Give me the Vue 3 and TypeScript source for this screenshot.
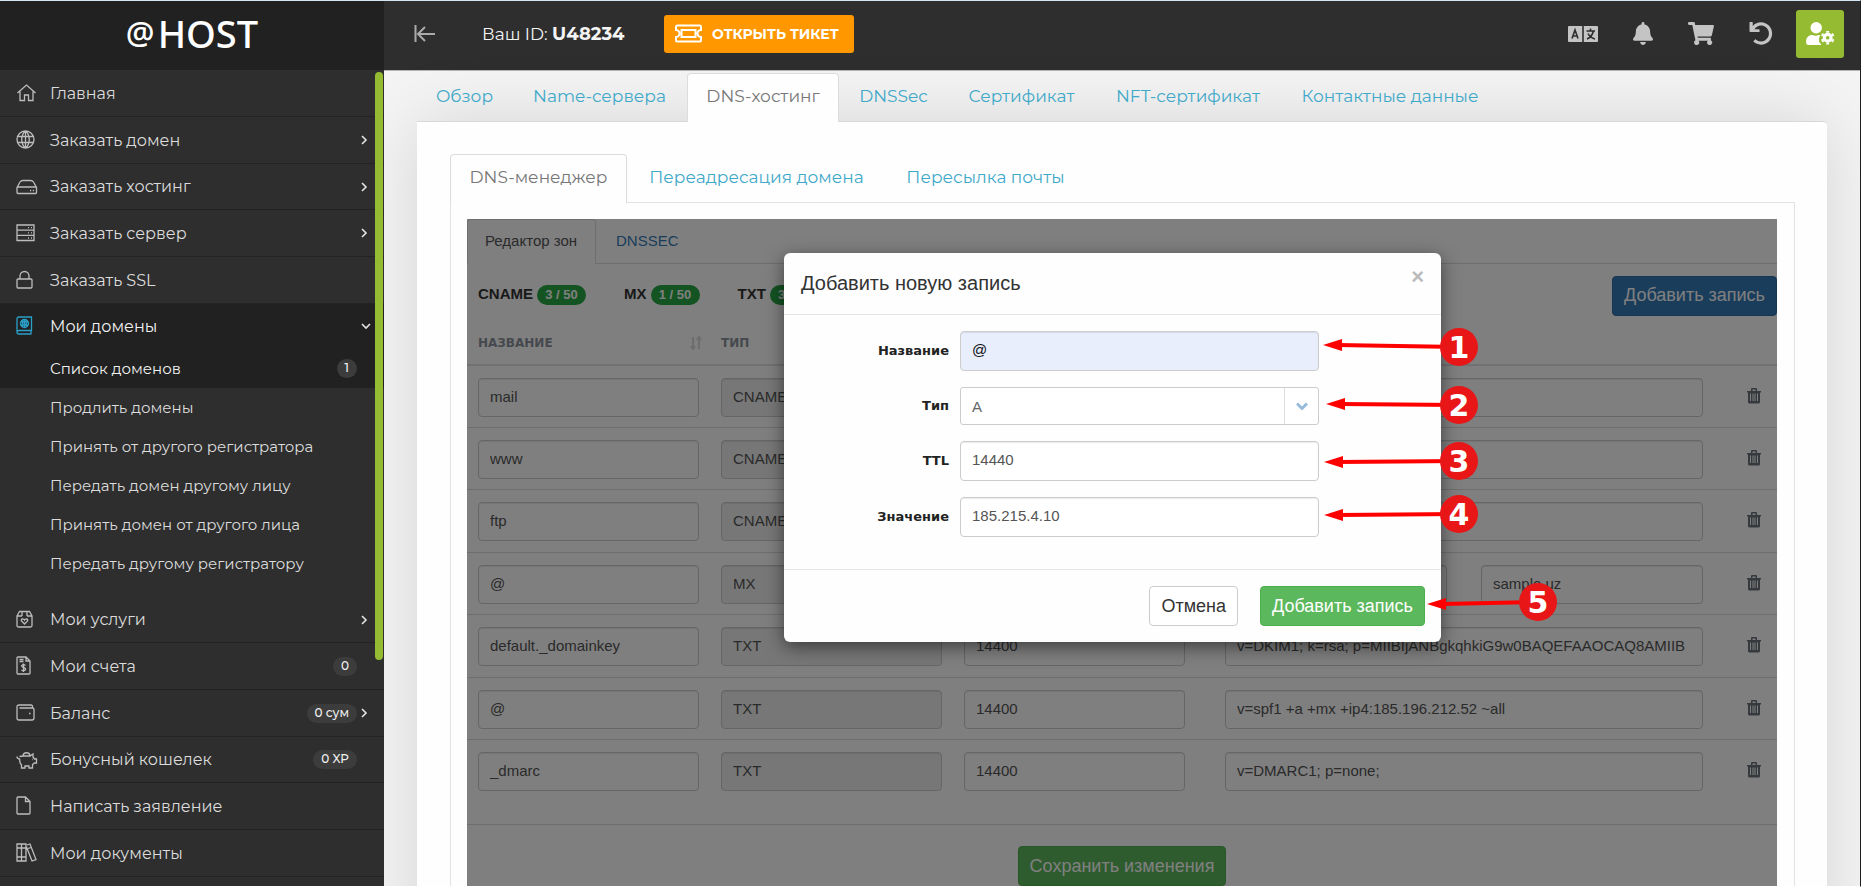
<script setup lang="ts">
import { ref } from 'vue'

interface MenuItem {
  label: string
  icon: string
  badge?: string
  arrow?: boolean
}

interface DnsRecord {
  name: string
  type: string
  ttl: string
  values: string[]
}

const icons: Record<string, string> = {
  home: 'M1.5 10L10.5 2L19.5 10M4 8.5V17.5H8.5V12H12.5V17.5H17V8.5',
  globe:
    'M1 9.5a8.5 8.5 0 1 0 17 0a8.5 8.5 0 1 0-17 0M2 6.5H17M2 12.5H17M9.5 1v17M9.5 1c-5 4-5 13 0 17M9.5 1c5 4 5 13 0 17',
  drive:
    'M1 10.5L4 5Q5 3.5 7 3.5H14.500Q16.500 3.500 17.500 5L20.500 10.500V15.500Q20.500 16.500 19.500 16.500H2Q1 16.500 1 15.500ZM1.500 10H20M14 13.500h1.200M16.800 13.500h1.200',
  server: 'M1 2H18V17.500H1ZM1 7.200H18M1 12.400H18M12 4.600h1M15 4.600h1M12 9.800h1M15 9.800h1M12 15h1M15 15h1',
  lock: 'M2 9H15Q16 9 16 10V17Q16 18 15 18H2Q1 18 1 17V10Q1 9 2 9ZM4 9V6a4.500 4.500 0 0 1 9 0V9',
  book: 'M3 1H15.500V14.500H3Q1 14.500 1 16.200Q1 18 3 18H15.500M1 16V3Q1 1 3 1M15 14.500V18M4.500 7.500a4 4 0 1 0 8 0a4 4 0 1 0-8 0M4.500 6H12.500M4.500 9H12.500M8.500 3.500V11.500M6.700 4.500V10.500M10.300 4.500V10.500',
  box: 'M1 6L3.500 1.500H13.500L16 6V15.500Q16 17 14.500 17H2.500Q1 17 1 15.500ZM1 6H6M11 6H16M6 1.500V6M11 1.500V6M8.500 14L5.500 11Q4.800 9 6.500 8.800Q8 9 8.500 10Q9 9 10.500 8.800Q12.200 9 11.500 11Z',
  invoice: 'M2 1H10L14 5V17.500Q14 18 13 18H2Q1 18 1 17V2Q1 1 2 1ZM10 1V5H14M3.500 3.500H7.500M3.500 5.500H7.500M9.500 9.500Q7.500 7.800 5.800 9.500Q5.500 11 7.500 11.500Q10 12 9.500 13.800Q7.500 15.500 5.500 14M7.500 7.500V16',
  wallet: 'M16.500 4.500V3.500Q16.500 2 15 2H3Q1 2 1 4V15Q1 17 3 17H16Q18 17 18 15V6.500Q18 5 16.500 5H3.500M13 10.500h1.500',
  piggy: 'M1 6.500Q1 9 4 9M3.500 6.500L7.500 6H14L17 4V7L18.500 9H20.500V13H18.500L16.500 14.500V18H13V16H9V18H5.500V15Q3 12 4 9M7 5.500A3.600 3.600 0 0 1 14 5.500M16 9.500h.5',
  file: 'M2 1H9.500L14 5.500V17Q14 18 13 18H2Q1 18 1 17V2Q1 1 2 1ZM9.500 1V5.500H14',
  books: 'M1 1H10V18H1ZM5.500 1V18M1 5H10M1 14H10M11 2L14 1L20 16.500L16 18L10.500 4M12 5.500L15 4.500',
}

const topMenu: MenuItem[] = [
  { label: 'Главная', icon: 'home' },
  { label: 'Заказать домен', icon: 'globe', arrow: true },
  { label: 'Заказать хостинг', icon: 'drive', arrow: true },
  { label: 'Заказать сервер', icon: 'server', arrow: true },
  { label: 'Заказать SSL', icon: 'lock' },
]

const domainMenu = [
  'Продлить домены',
  'Принять от другого регистратора',
  'Передать домен другому лицу',
  'Принять домен от другого лица',
  'Передать другому регистратору',
]

const bottomMenu: MenuItem[] = [
  { label: 'Мои услуги', icon: 'box', arrow: true },
  { label: 'Мои счета', icon: 'invoice', badge: '0' },
  { label: 'Баланс', icon: 'wallet', badge: '0 сум', arrow: true },
  { label: 'Бонусный кошелек', icon: 'piggy', badge: '0 XP' },
  { label: 'Написать заявление', icon: 'file' },
  { label: 'Мои документы', icon: 'books' },
]

const tabs = ['Обзор', 'Name-сервера', 'DNS-хостинг', 'DNSSec', 'Сертификат', 'NFT-сертификат', 'Контактные данные']
const subTabs = ['DNS-менеджер', 'Переадресация домена', 'Пересылка почты']

const quotas = [
  { type: 'CNAME', used: '3 / 50' },
  { type: 'MX', used: '1 / 50' },
  { type: 'TXT', used: '3 / 50' },
]

const records = ref<DnsRecord[]>([
  { name: 'mail', type: 'CNAME', ttl: '14400', values: [''] },
  { name: 'www', type: 'CNAME', ttl: '14400', values: [''] },
  { name: 'ftp', type: 'CNAME', ttl: '14400', values: [''] },
  { name: '@', type: 'MX', ttl: '14400', values: ['', 'sample.uz'] },
  {
    name: 'default._domainkey',
    type: 'TXT',
    ttl: '14400',
    values: ['v=DKIM1; k=rsa; p=MIIBIjANBgkqhkiG9w0BAQEFAAOCAQ8AMIIB'],
  },
  { name: '@', type: 'TXT', ttl: '14400', values: ['v=spf1 +a +mx +ip4:185.196.212.52 ~all'] },
  { name: '_dmarc', type: 'TXT', ttl: '14400', values: ['v=DMARC1; p=none;'] },
])

const form = ref({ name: '@', type: 'A', ttl: '14440', value: '185.215.4.10' })

const markers = [
  { n: 1, x: 675, y: 94, tipX: 539, tipY: 92 },
  { n: 2, x: 675, y: 152, tipX: 542, tipY: 151 },
  { n: 3, x: 675, y: 208, tipX: 540, tipY: 209 },
  { n: 4, x: 675, y: 261, tipX: 540, tipY: 262 },
  { n: 5, x: 754, y: 349, tipX: 643, tipY: 351 },
]
</script>

<template>
  <div class="app">
    <aside class="sidebar">
      <a class="logo" href="#"><span class="logo-at">@</span>HOST</a>
      <nav class="menu">
        <a v-for="item in topMenu" :key="item.label" class="menu-row" href="#">
          <svg class="menu-icon" viewBox="0 0 22 20"><path :d="icons[item.icon]" /></svg>
          <span class="menu-label">{{ item.label }}</span>
          <svg v-if="item.arrow" class="arrow" viewBox="0 0 10 10"><path d="M3 1l4 4-4 4" /></svg>
        </a>
        <a class="menu-row open" href="#">
          <svg class="menu-icon" viewBox="0 0 22 20"><path :d="icons.book" /></svg>
          <span class="menu-label">Мои домены</span>
          <svg class="arrow" viewBox="0 0 10 10"><path d="M1 3l4 4 4-4" /></svg>
        </a>
        <a class="sub-row current" href="#">
          <span class="menu-label">Список доменов</span>
          <span class="count">1</span>
        </a>
        <div class="sub-menu">
          <a v-for="label in domainMenu" :key="label" class="sub-row" href="#">{{ label }}</a>
        </div>
        <a v-for="item in bottomMenu" :key="item.label" class="menu-row" href="#">
          <svg class="menu-icon" viewBox="0 0 22 20"><path :d="icons[item.icon]" /></svg>
          <span class="menu-label">{{ item.label }}</span>
          <span v-if="item.badge" class="count">{{ item.badge }}</span>
          <svg v-if="item.arrow" class="arrow" viewBox="0 0 10 10"><path d="M3 1l4 4-4 4" /></svg>
        </a>
      </nav>
      <div class="scroll-thumb"></div>
    </aside>

    <div class="content">
      <header class="topbar">
        <button class="icon-btn collapse" type="button" aria-label="Свернуть меню">
          <svg width="22" height="20" viewBox="0 0 22 20"><path d="M1.500 1V18M4 10H21M11 3L4 10L11 17" /></svg>
        </button>
        <span class="user-id">Ваш ID: <b>U48234</b></span>
        <button class="ticket-btn" type="button">
          <svg width="27" height="19" viewBox="0 0 27 19">
            <path d="M2 1.500H25Q26 1.500 26 3V6A3.500 3.500 0 0 0 26 13V16Q26 17.500 25 17.500H2Q1 17.500 1 16V13A3.500 3.500 0 0 0 1 6V3Q1 1.500 2 1.500ZM6.500 6H20.500V13H6.500Z" />
          </svg>
          ОТКРЫТЬ ТИКЕТ
        </button>
        <div class="tools">
          <button class="icon-btn" type="button" aria-label="Язык">
            <svg width="30" height="16" viewBox="0 0 30 16">
              <path class="solid" d="M1 0H29Q30 0 30 1V15Q30 16 29 16H1Q0 16 0 15V1Q0 0 1 0Z" />
              <path class="cut" d="M15 0V16M4 12.500L7 4L10 12.500M5 10H9M18.500 5H27M22.500 2.500V5M25.500 5Q24 11 19 13M20 7.500Q22 11.500 27 13" />
            </svg>
          </button>
          <button class="icon-btn" type="button" aria-label="Уведомления">
            <svg width="20" height="23" viewBox="0 0 448 512">
              <path class="solid" d="M224 512c35 0 64-29 64-64H160c0 35 29 64 64 64zm215-150c-19-21-55-52-55-154 0-78-54-140-128-155V32a32 32 0 1 0-64 0v21C118 68 64 130 64 208c0 102-36 133-55 154-6 6-9 14-9 22 0 16 13 32 32 32h384c19 0 32-16 32-32 0-8-3-16-9-22z" />
            </svg>
          </button>
          <button class="icon-btn" type="button" aria-label="Корзина">
            <svg width="26" height="23" viewBox="0 0 576 512">
              <path class="solid" d="M528 301l47-208c4-15-8-29-23-29H159l-9-45C148 8 138 0 126 0H24C11 0 0 11 0 24v16c0 13 11 24 24 24h70l70 343a56 56 0 1 0 67 9h210a56 56 0 1 0 64-10l5-25c4-15-8-29-23-29H218l-7-32h294c11 0 21-8 23-19z" />
            </svg>
          </button>
          <button class="icon-btn" type="button" aria-label="Обновить">
            <svg width="24" height="23" viewBox="0 0 512 512">
              <path class="solid" d="M212 224H24c-13 0-24-11-24-24V12C0 5 5 0 12 0h48c7 0 12 5 12 12v78A247 247 0 0 1 256 8c137 0 248 111 248 248S393 504 256 504c-63 0-121-24-165-62-5-5-5-13 0-18l34-34c4-4 12-5 17-1 30 27 70 43 114 43a176 176 0 1 0-147-272h103c7 0 12 5 12 12v40c0 7-5 12-12 12z" />
            </svg>
          </button>
          <button class="account" type="button" aria-label="Аккаунт">
            <svg width="29" height="23" viewBox="0 0 640 512">
              <path class="solid" d="M224 256a128 128 0 1 0 0-256a128 128 0 1 0 0 256zM320 480c-50-45-40-130-2-186l-20-6h-17a174 174 0 0 1-146 0h-1C60 288 0 348 0 422v42c0 26 22 48 48 48h290z" />
              <path class="gear" d="M480 198v44M480 458v44M348 274l38 22M574 404l38 22M348 426l38-22M574 296l38-22" />
              <circle class="gear-ring" cx="480" cy="350" r="76" />
            </svg>
          </button>
        </div>
      </header>

      <main class="main">
        <nav class="tabs">
          <a v-for="tab in tabs" :key="tab" class="tab" :class="{ active: tab === 'DNS-хостинг' }" href="#">{{ tab }}</a>
        </nav>
        <section class="card">
          <nav class="tabs sub-tabs">
            <a v-for="tab in subTabs" :key="tab" class="tab" :class="{ active: tab === 'DNS-менеджер' }" href="#">{{ tab }}</a>
          </nav>
          <div class="sub-card">
            <div class="panel">
              <nav class="zone-tabs">
                <a class="zone-tab active" href="#">Редактор зон</a>
                <a class="zone-tab" href="#">DNSSEC</a>
              </nav>
              <div class="zone-bar">
                <span v-for="quota in quotas" :key="quota.type" class="quota">
                  {{ quota.type }} <span class="quota-badge">{{ quota.used }}</span>
                </span>
                <button class="btn primary" type="button">Добавить запись</button>
              </div>
              <table class="records">
                <colgroup>
                  <col class="col-field" />
                  <col class="col-field" />
                  <col class="col-field" />
                  <col />
                  <col class="col-action" />
                </colgroup>
                <thead>
                  <tr>
                    <th>
                      <span class="th-in">
                        НАЗВАНИЕ
                        <svg width="12" height="14" viewBox="0 0 12 14"><path d="M3 1V12M1 10L3 13L5 10M9 13V2M7 4L9 1L11 4" /></svg>
                      </span>
                    </th>
                    <th>ТИП</th>
                    <th></th>
                    <th></th>
                    <th></th>
                  </tr>
                </thead>
                <tbody>
                  <tr v-for="(record, i) in records" :key="i">
                    <td><input v-model="record.name" class="field" aria-label="Название" /></td>
                    <td><input :value="record.type" class="field" aria-label="Тип" disabled /></td>
                    <td><input v-model="record.ttl" class="field" aria-label="TTL" /></td>
                    <td class="value-cell">
                      <div class="values">
                        <input v-for="(_, j) in record.values" :key="j" v-model="record.values[j]" class="field" aria-label="Значение" />
                      </div>
                    </td>
                    <td class="action">
                      <button class="trash" type="button" aria-label="Удалить">
                        <svg width="14" height="16" viewBox="0 0 14 16">
                          <path d="M4 3V1Q4 0 5 0H9Q10 0 10 1V3H14V4.500H13V14Q13 15.500 11.500 15.500H2.500Q1 15.500 1 14V4.500H0V3ZM5.500 1.500V3H8.500V1.500ZM3 5.500V13H4V5.500ZM5.500 5.500V13H6.500V5.500ZM7.500 5.500V13H8.500V5.500ZM10 5.500V13H11V5.500Z" />
                        </svg>
                      </button>
                    </td>
                  </tr>
                </tbody>
              </table>
              <div class="save-bar">
                <button class="btn success" type="button">Сохранить изменения</button>
              </div>

              <div class="backdrop">
                <form class="modal" role="dialog" aria-labelledby="dialog-title" @submit.prevent>
                  <header class="modal-head">
                    <h2 id="dialog-title">Добавить новую запись</h2>
                    <button class="close" type="button" aria-label="Закрыть">×</button>
                  </header>
                  <div class="modal-body">
                    <label for="rec-name">Название</label>
                    <input id="rec-name" v-model="form.name" class="field filled" />
                    <label for="rec-type">Тип</label>
                    <div class="select">
                      <select id="rec-type" v-model="form.type">
                        <option>A</option>
                        <option>CNAME</option>
                        <option>MX</option>
                        <option>TXT</option>
                      </select>
                      <span class="caret">
                        <svg width="12" height="8" viewBox="0 0 12 8"><path d="M1 1.500L6 6.500L11 1.500" /></svg>
                      </span>
                    </div>
                    <label for="rec-ttl">TTL</label>
                    <input id="rec-ttl" v-model="form.ttl" class="field" />
                    <label for="rec-value">Значение</label>
                    <input id="rec-value" v-model="form.value" class="field" />
                  </div>
                  <footer class="modal-foot">
                    <button class="btn plain" type="button">Отмена</button>
                    <button class="btn success" type="submit">Добавить запись</button>
                  </footer>
                  <svg class="markers" width="657" height="390" viewBox="0 0 657 390">
                    <g v-for="m in markers" :key="m.n">
                      <line :x1="m.tipX + 14" :y1="m.tipY" :x2="m.x" :y2="m.y" />
                      <path :d="`M${m.tipX} ${m.tipY}l19-6v12z`" />
                      <circle :cx="m.x" :cy="m.y" r="19" />
                      <text :x="m.x" :y="m.y + 11">{{ m.n }}</text>
                    </g>
                  </svg>
                </form>
              </div>
            </div>
          </div>
        </section>
      </main>
    </div>
  </div>
</template>

<style>
body {
  margin: 0;
  overflow: hidden;
}
</style>

<style scoped>
* {
  box-sizing: border-box;
}
a {
  color: inherit;
  text-decoration: none;
}
button {
  font: inherit;
  cursor: pointer;
}
svg {
  display: block;
  flex: none;
}
.app {
  display: flex;
  height: 100vh;
  overflow: hidden;
  border-top: 1px solid #d3e6f2;
  border-right: 1px solid #1d1f22;
  border-bottom: 1px solid #fff;
  font-family: Montserrat, Inter, 'Noto Sans', sans-serif;
  font-size: 16px;
  background: #f4f4f4;
}

/* Sidebar */
.sidebar {
  position: relative;
  flex: none;
  width: 384px;
  background: #2e2e2e;
  color: #dcdcdc;
}
.logo {
  display: flex;
  align-items: center;
  justify-content: center;
  gap: 3px;
  height: 69px;
  padding-bottom: 5px;
  background: #212121;
  color: #fff;
  font-family: 'Noto Sans', 'Open Sans', sans-serif;
  font-size: 38px;
  font-weight: 500;
  line-height: 1;
}
.logo-at {
  font-size: 32px;
}
.menu {
  display: flex;
  flex-direction: column;
}
.menu-row {
  display: flex;
  align-items: center;
  height: 47px;
  padding: 0 15px 0 16px;
  border-bottom: 1px solid #232323;
}
.menu-row:nth-child(3n) {
  height: 46px;
}
.menu-icon {
  width: 22px;
  height: 20px;
  margin-right: 12px;
  fill: none;
  stroke: #bdbdbd;
  stroke-width: 1.3;
}
.menu-label {
  flex: 1;
}
.arrow {
  width: 10px;
  height: 10px;
  fill: none;
  stroke: #e4e4e4;
  stroke-width: 1.6;
}
.menu-row .count {
  margin-right: 12px;
}
.menu-row .count + .arrow {
  margin-left: -10px;
}
.menu-row.open {
  height: 44px;
  padding-right: 13px;
  border: 0;
  background: #212121;
  color: #f2f2f2;
}
.open .menu-icon {
  stroke: #2a9fc9;
}
.sub-row {
  display: flex;
  align-items: center;
  height: 39px;
  padding: 0 27px 0 50px;
  font-size: 15px;
}
.current {
  height: 40px;
  background: #212121;
  color: #f2f2f2;
}
.sub-menu {
  padding-bottom: 14px;
}
.count {
  height: 19px;
  padding: 0 8px;
  border-radius: 10px;
  background: #3c3c3c;
  color: #f0f0f0;
  font-size: 12px;
  font-weight: 500;
  line-height: 18px;
}
.scroll-thumb {
  position: absolute;
  top: 71px;
  right: 1px;
  width: 8px;
  height: 588px;
  border-radius: 4px;
  background: #94bb31;
}

/* Top bar */
.content {
  flex: 1;
  min-width: 0;
  overflow: hidden;
}
.topbar {
  display: flex;
  align-items: center;
  height: 70px;
  padding: 0 16px 4px 30px;
  border-bottom: 1px solid #b5b5b5;
  background: #2e2e2e;
  color: #f4f4f4;
}
.icon-btn {
  padding: 0;
  border: 0;
  background: none;
}
.collapse path {
  fill: none;
  stroke: #aaa;
  stroke-width: 2;
}
.user-id {
  width: 182px;
  margin-left: 46px;
  font-size: 17px;
  white-space: nowrap;
}
.user-id b {
  font-size: 18px;
}
.ticket-btn {
  display: flex;
  align-items: center;
  gap: 10px;
  width: 190px;
  height: 38px;
  padding: 0 11px;
  border: 0;
  border-radius: 3px;
  background: #ff9800;
  color: #fff;
  font-size: 14px;
  font-weight: 700;
  white-space: nowrap;
}
.ticket-btn path {
  fill: none;
  stroke: #fff;
  stroke-width: 2;
}
.tools {
  display: flex;
  align-items: center;
  gap: 35px;
  margin-left: auto;
}
.solid {
  fill: #c4c4c4;
}
.cut {
  fill: none;
  stroke: #2e2e2e;
  stroke-width: 1.6;
}
.account {
  display: flex;
  align-items: center;
  justify-content: center;
  width: 48px;
  height: 48px;
  margin-left: -12px;
  padding: 0;
  border: 0;
  border-radius: 3px;
  background: #94bb31;
}
.account .solid {
  fill: #fff;
}
.gear {
  stroke: #fff;
  stroke-width: 66;
}
.gear-ring {
  fill: none;
  stroke: #fff;
  stroke-width: 70;
}

/* Page */
.main {
  padding: 2px 33px 0;
}
.tabs {
  position: relative;
  display: grid;
  grid-template-columns: 95px 175px 152px 109px 147px 186px 218px;
  height: 49px;
  color: #3fa9c9;
  font-size: 17px;
  z-index: 1;
}
.tab {
  display: flex;
  align-items: center;
  justify-content: center;
  padding-bottom: 4px;
  white-space: nowrap;
}
.tab.active {
  border: 1px solid #dcdcdc;
  border-bottom: 0;
  border-radius: 4px 4px 0 0;
  background: #fefefe;
  color: #777;
}
.card {
  height: 900px;
  margin-top: -1px;
  padding: 32px 32px 0;
  border-top: 1px solid #d8d8d8;
  border-radius: 0 4px 0 0;
  background: #fefefe;
  box-shadow: 0 0 70px rgba(0, 0, 0, 0.13);
}
.sub-tabs {
  grid-template-columns: 177px 259px 199px;
  margin-left: 1px;
}
.sub-card {
  margin: -1px 0 0 1px;
  padding: 16px 17px 0 16px;
  border: 1px solid #e2e2e2;
}

/* Zone editor */
.panel {
  position: relative;
  height: 700px;
  background: #fff;
  color: #333;
  font-family: 'Liberation Sans', Arial, sans-serif;
  font-size: 15px;
}
.zone-tabs {
  display: flex;
  height: 45px;
  border-bottom: 1px solid #ddd;
}
.zone-tab {
  height: 45px;
  padding: 0 20px;
  color: #337ab7;
  line-height: 43px;
  white-space: nowrap;
}
.zone-tab.active {
  width: 129px;
  padding: 0 17px;
  border: 1px solid #ddd;
  border-bottom-color: #fff;
  border-radius: 4px 4px 0 0;
  color: #555;
  line-height: 41px;
}
.zone-bar {
  display: flex;
  align-items: center;
  gap: 38px;
  height: 63px;
  padding-left: 11px;
}
.quota {
  display: flex;
  align-items: center;
  gap: 4px;
  padding-bottom: 5px;
  color: #333;
  font-weight: 700;
}
.quota-badge {
  width: 49px;
  height: 20px;
  margin-top: 3px;
  border-radius: 10px;
  background: #28a745;
  color: #fff;
  font-size: 13px;
  line-height: 20px;
  text-align: center;
}
.btn {
  height: 40px;
  padding: 0 11px;
  border: 1px solid;
  border-radius: 4px;
  font-size: 18px;
  white-space: nowrap;
}
.primary {
  margin-left: auto;
  border-color: #2e6da4;
  background: #337ab7;
  color: #fff;
}
.success {
  border-color: #4cae4c;
  background: #5cb85c;
  color: #fff;
}
.plain {
  border-color: #ccc;
  background: #fff;
  color: #333;
}
.records {
  width: 100%;
  table-layout: fixed;
  border-collapse: separate;
  border-spacing: 0;
}
.col-field {
  width: 243px;
}
.col-action {
  width: 63px;
}
.records th {
  height: 39px;
  padding: 0 8px 5px 11px;
  border-bottom: 2px solid #dee2e6;
  color: #8a929c;
  font: bold 12px 'DejaVu Sans', sans-serif;
  text-align: left;
}
.th-in {
  display: flex;
  align-items: center;
  justify-content: space-between;
}
.th-in path {
  fill: none;
  stroke: #dadada;
  stroke-width: 2;
}
.records td {
  padding: 12px 11px 10px;
  border-bottom: 1px solid #ddd;
}
.records tr:nth-child(2n + 3) td {
  padding-bottom: 11px;
}
.records tr:last-child td {
  padding-bottom: 33px;
}
.records .value-cell {
  padding-left: 29px;
}
.values {
  display: flex;
  gap: 34px;
}
.field {
  display: block;
  width: 100%;
  min-width: 0;
  height: 39px;
  padding: 0 11px 3px;
  border: 1px solid #ccc;
  border-radius: 4px;
  outline: 0;
  background: #fff;
  box-shadow: inset 0 1px 1px rgba(0, 0, 0, 0.08);
  color: #555;
  font: 15px 'Liberation Sans', Arial, sans-serif;
}
.field:disabled {
  background: #eee;
}
.records .action {
  padding-right: 0;
  padding-left: 33px;
}
.trash {
  padding: 0;
  border: 0;
  background: none;
}
.trash path {
  fill: #6c757d;
  fill-rule: evenodd;
}
.save-bar {
  display: flex;
  justify-content: center;
  padding-top: 21px;
}

/* Dialog */
.backdrop {
  position: absolute;
  inset: 0;
  display: flex;
  align-items: flex-start;
  justify-content: center;
  padding: 34px 19px 0 0;
  background: rgba(0, 0, 0, 0.5);
}
.modal {
  position: relative;
  width: 657px;
  border-radius: 6px;
  background: #fefefe;
  box-shadow: 0 5px 18px rgba(0, 0, 0, 0.5);
}
.modal-head {
  display: flex;
  align-items: flex-start;
  justify-content: space-between;
  height: 62px;
  padding: 18px 17px 0;
  border-bottom: 1px solid #e5e5e5;
}
.modal-head h2 {
  margin: 0;
  font-size: 20px;
  font-weight: 400;
  line-height: 24px;
}
.close {
  padding: 0;
  border: 0;
  background: none;
  color: #bbb;
  font-size: 22px;
  font-weight: 700;
  line-height: 12px;
}
.modal-body {
  display: grid;
  grid-template-columns: 165px 359px;
  align-items: center;
  gap: 16px 11px;
  padding: 16px 0 32px;
}
.modal-body label {
  padding-bottom: 1px;
  color: #222;
  font: bold 13px 'DejaVu Sans', sans-serif;
  text-align: right;
}
.modal-body .field {
  height: 40px;
}
.modal-body .filled {
  background: #e8eefc;
  color: #111;
}
.select {
  display: flex;
  height: 38px;
  border: 1px solid #ccc;
  border-radius: 3px;
  background: #fff;
}
.select select {
  flex: 1;
  padding: 0 11px;
  border: 0;
  outline: 0;
  background: none;
  color: #666;
  appearance: none;
  font: 15px 'Liberation Sans', Arial, sans-serif;
}
.caret {
  display: flex;
  align-items: center;
  justify-content: center;
  width: 34px;
  border-left: 1px solid #ddd;
}
.caret path {
  fill: none;
  stroke: #96bbdb;
  stroke-width: 3;
}
.modal-foot {
  display: flex;
  justify-content: flex-end;
  gap: 22px;
  padding: 16px;
  border-top: 1px solid #e5e5e5;
}
.markers {
  position: absolute;
  top: 0;
  left: 0;
  overflow: visible;
  pointer-events: none;
}
.markers line {
  stroke: #f00;
  stroke-width: 4;
}
.markers path {
  fill: #f00;
}
.markers circle {
  fill: #e81616;
}
.markers text {
  fill: #fff;
  font: bold 30px 'DejaVu Sans', sans-serif;
  text-anchor: middle;
}
</style>
